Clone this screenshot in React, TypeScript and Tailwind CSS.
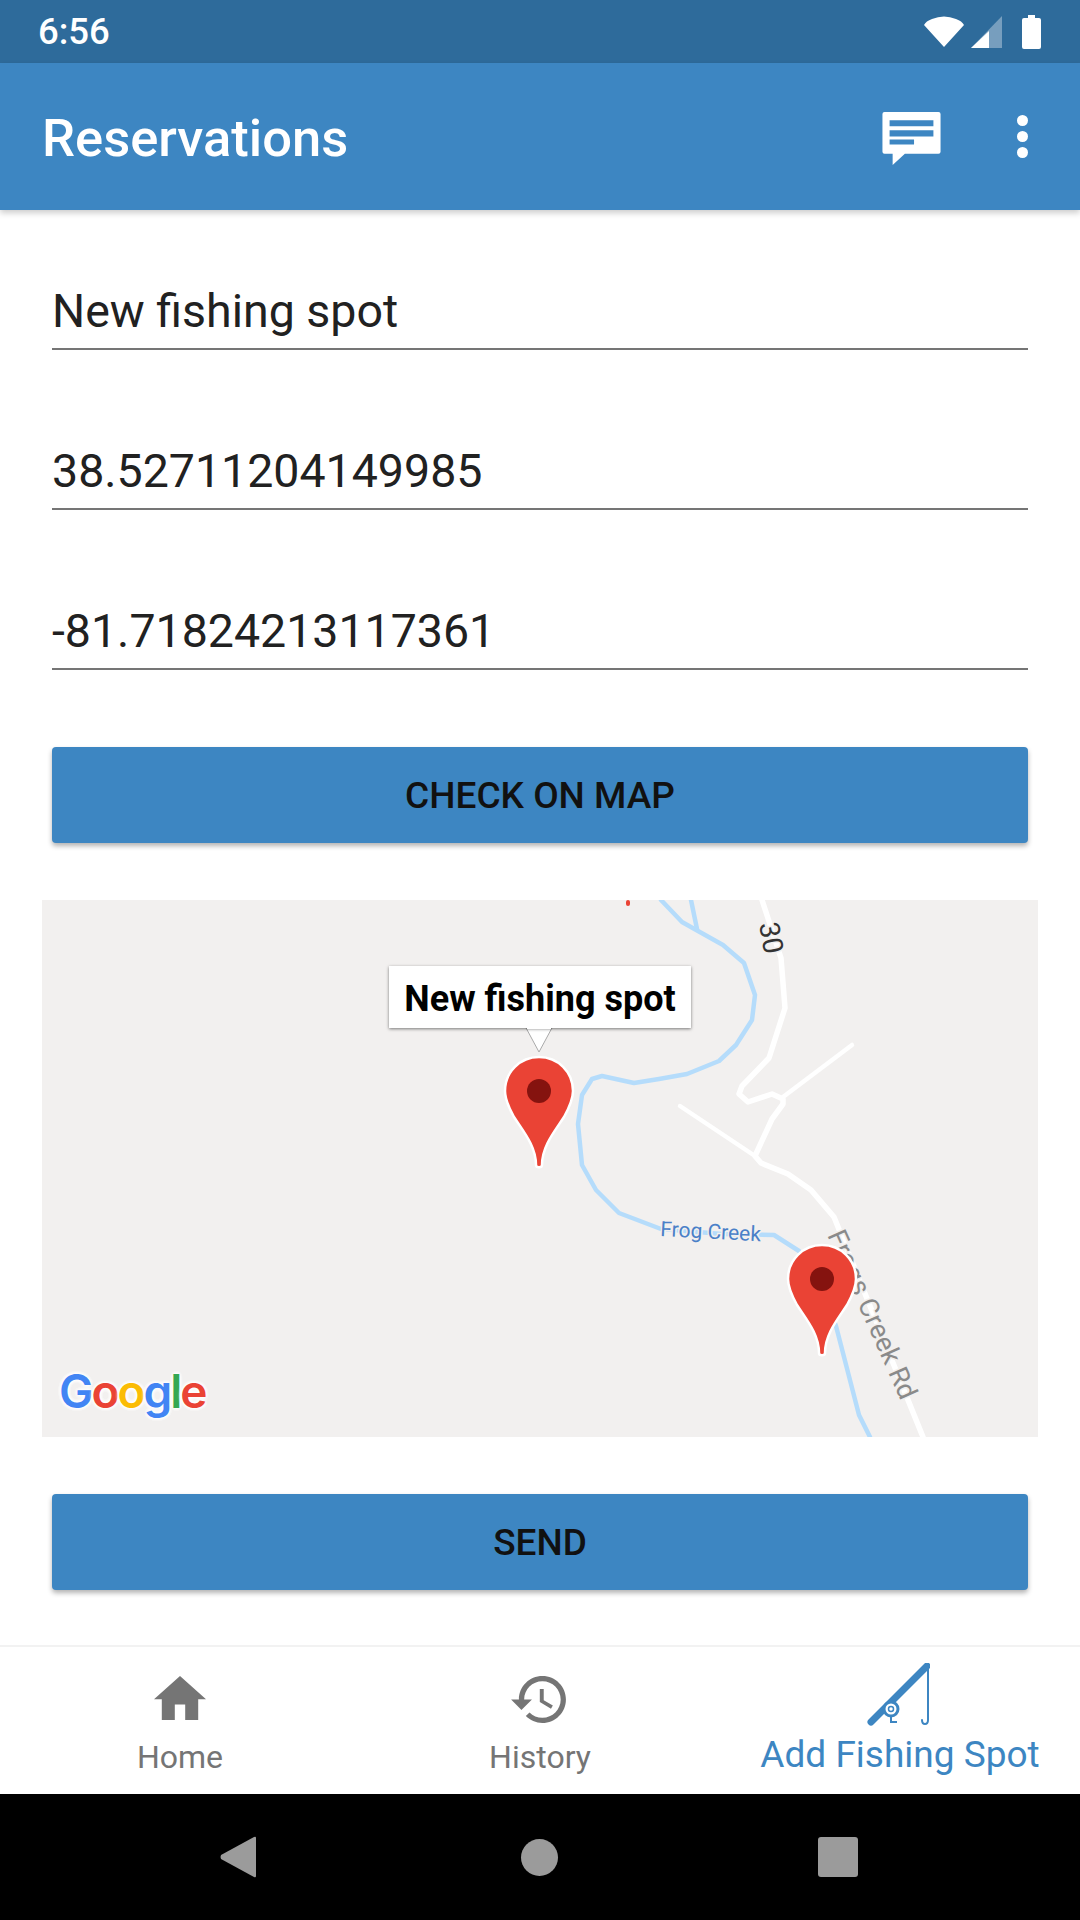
const river = '619,0 640,22 656,31 681,45 702,63 713,95 710,120 694,145 677,161 645,174 617,179 592,183 560,176 550,179 540,195 536,224 540,265 554,290 577,313 619,329 680,334 732,335 757,351 780,390 794,426 817,515 828,537'
const road = '720,0 739,58 743,108 727,158 700,186 697,194 706,202 730,194 741,199 741,204 730,219 713,256 719,263 746,274 769,290 792,317 881,537'

function Field({ value }: { value: string }) {
  return (
    <div className="mx-[52px] h-[65px] border-b-2 border-[#757575] text-[46.5px] leading-[52px] text-[#212121]">
      {value}
    </div>
  )
}

function ActionButton({ label }: { label: string }) {
  return (
    <button className="mx-[52px] h-[96px] rounded-[4px] bg-[#3d86c2] pt-[2px] text-[37px] font-medium text-[#111] shadow-[0_3px_5px_rgba(0,0,0,0.3)]">
      {label}
    </button>
  )
}

function Pin({ x, y }: { x: number; y: number }) {
  return (
    <g transform={`translate(${x} ${y})`}>
      <path
        d="M0 -1C-19 -1 -34 14 -34 33C-34 42 -30 50 -25 59C-16 73 -3 88 -3 107C-3 110 3 110 3 107C3 88 16 73 25 59C30 50 34 42 34 33C34 14 19 -1 0 -1Z"
        fill="#ea4335"
        stroke="#fff"
        strokeWidth="2.5"
      />
      <circle cx="0" cy="33" r="12" fill="#85130f" />
    </g>
  )
}

function MapPanel() {
  return (
    <div className="relative mx-[42px] mt-[57px] h-[537px] overflow-hidden bg-[#f2f0ef]">
      <svg viewBox="0 0 996 537" className="h-full w-full">
        <g fill="none" strokeLinejoin="round" strokeLinecap="round">
          <polyline points={river} stroke="#b5dcfb" strokeWidth="4.5" />
          <polyline points="649,0 655,29" stroke="#b5dcfb" strokeWidth="4.5" />
          <polyline points={road} stroke="#fff" strokeWidth="5.5" />
          <polyline points="810,145 741,197" stroke="#fff" strokeWidth="4.5" />
          <polyline points="638,206 713,256" stroke="#fff" strokeWidth="4.5" />
        </g>
        <rect x="584" y="0" width="4" height="6" rx="2" fill="#ea4335" />
        <text
          transform="translate(717 24) rotate(80)"
          fontSize="28"
          fill="#333"
          stroke="#f2f0ef"
          strokeWidth="3"
          paintOrder="stroke"
        >
          30
        </text>
        <text
          transform="translate(618 336) rotate(3)"
          fontSize="21"
          fill="#4a80c8"
          stroke="#f2f0ef"
          strokeWidth="3"
          paintOrder="stroke"
        >
          Frog Creek
        </text>
        <text
          transform="translate(785 335) rotate(66)"
          fontSize="27"
          fill="#8a8a8a"
          stroke="#f2f0ef"
          strokeWidth="3"
          paintOrder="stroke"
        >
          Frogs Creek Rd
        </text>
        <Pin x={497} y={158} />
        <Pin x={780} y={346} />
        <path d="M483 126L497 152L511 126Z" fill="#fff" stroke="#aaa" strokeWidth="1" />
      </svg>

      <div className="absolute left-[347px] top-[66px] flex h-[62px] w-[302px] items-center justify-center bg-white pt-[3px] text-[36px] font-bold text-black shadow-[0_1px_3px_rgba(0,0,0,0.5)]">
        New fishing spot
      </div>
      <div className="absolute left-[485px] top-[125px] h-[4px] w-[24px] bg-white" />

      <div className="absolute left-[17px] top-[461px] font-['Inter',sans-serif] text-[46px] leading-[60px] font-semibold tracking-[-2px] [text-shadow:0_0_4px_#fff,0_0_4px_#fff,0_0_4px_#fff,0_0_4px_#fff]">
        <span className="text-[#4285f4]">G</span>
        <span className="text-[#ea4335]">o</span>
        <span className="text-[#fbbc05]">o</span>
        <span className="text-[#4285f4]">g</span>
        <span className="text-[#34a853]">l</span>
        <span className="text-[#ea4335]">e</span>
      </div>
    </div>
  )
}

function NavItem({ label, active, children }: { label: string; active?: boolean; children: React.ReactNode }) {
  return (
    <div className="flex flex-1 flex-col items-center pt-[13px]">
      <div className="flex h-[63px] items-end justify-center">{children}</div>
      <span className={active ? 'mt-[10px] text-[37px] leading-[44px] text-[#3d86c2]' : 'mt-[12px] text-[32px] leading-[44px] text-[#757575]'}>
        {label}
      </span>
    </div>
  )
}

export default function App() {
  return (
    <div className="flex h-[1920px] w-[1080px] flex-col overflow-hidden bg-white font-['Roboto',sans-serif]">
      <div className="flex h-[63px] items-center justify-between bg-[#2e6b9b] pl-[38px] pr-[39px]">
        <span className="mt-[2px] text-[36.5px] font-medium text-white">6:56</span>
        <div className="flex items-center gap-[7px]">
          <svg width="40" height="32" viewBox="0 0 40 32">
            <path d="M20 31L0 9Q2 5 8 3Q20 -2 32 3Q38 5 40 9Z" fill="#fff" />
          </svg>
          <svg width="31" height="32" viewBox="0 0 31 32" className="mr-[13px]">
            <path d="M31 0V32H0Z" fill="#fff" fillOpacity="0.35" />
            <path d="M18 15V32H0Z" fill="#fff" />
          </svg>
          <svg width="19" height="34" viewBox="0 0 19 34">
            <path d="M6 0H13V3H17Q19 3 19 5V32Q19 34 17 34H2Q0 34 0 32V5Q0 3 2 3H6Z" fill="#fff" />
          </svg>
        </div>
      </div>

      <header className="relative z-10 flex h-[147px] items-center justify-between bg-[#3d86c2] pl-[42px] pr-[52px] shadow-[0_3px_6px_rgba(0,0,0,0.2)]">
        <h1 className="mt-[3px] text-[52.5px] font-medium text-white">Reservations</h1>
        <div className="flex items-center gap-[76px]">
          <svg width="59" height="53" viewBox="0 0 57 52" className="mt-[4px]">
            <path
              fillRule="evenodd"
              fill="#fff"
              d="M2 0H55Q57 0 57 2V39Q57 41 55 41H22L10 52V41H2Q0 41 0 39V2Q0 0 2 0ZM7 8V14H50V8ZM7 18V24H50V18ZM7 27V32H31V27Z"
            />
          </svg>
          <div className="flex flex-col gap-[5px]">
            <div className="h-[11px] w-[11px] rounded-full bg-white" />
            <div className="h-[11px] w-[11px] rounded-full bg-white" />
            <div className="h-[11px] w-[11px] rounded-full bg-white" />
          </div>
        </div>
      </header>

      <main className="flex flex-1 flex-col">
        <div className="mt-[75px] flex flex-col gap-[95px]">
          <Field value="New fishing spot" />
          <Field value="38.52711204149985" />
          <Field value="-81.71824213117361" />
        </div>
        <div className="mt-[77px] flex flex-col">
          <ActionButton label="CHECK ON MAP" />
        </div>
        <MapPanel />
        <div className="mt-[57px] flex flex-col">
          <ActionButton label="SEND" />
        </div>
      </main>

      <nav className="flex h-[149px] border-t-2 border-[#f2f2f2] bg-white">
        <NavItem label="Home">
          <svg width="52" height="46" viewBox="2 3 20 17" className="mb-[2px]">
            <path fill="#757575" d="M10 20v-6h4v6h5v-8h3L12 3 2 12h3v8z" />
          </svg>
        </NavItem>
        <NavItem label="History">
          <svg width="55" height="47" viewBox="1 3 21 18" className="mr-[4px]">
            <path
              fill="#757575"
              d="M13 3c-4.97 0-9 4.03-9 9H1l3.89 3.89.07.14L9 12H6c0-3.87 3.13-7 7-7s7 3.13 7 7-3.13 7-7 7c-1.93 0-3.68-.79-4.94-2.06l-1.42 1.42C8.27 19.99 10.51 21 13 21c4.97 0 9-4.03 9-9s-4.03-9-9-9zm-1 5v5l4.28 2.54.72-1.21-3.5-2.08V8H12z"
            />
          </svg>
        </NavItem>
        <NavItem label="Add Fishing Spot" active>
          <svg width="63" height="63" viewBox="0 0 63 63" fill="none" stroke="#3d86c2" className="mb-[-3px] mr-[3px]">
            <path d="M4 59L60 3" strokeWidth="7" strokeLinecap="round" />
            <path d="M61 3V57Q61 61 58 61Q55 61 55 57" strokeWidth="2" strokeLinecap="round" />
            <circle cx="24" cy="46" r="7" fill="#fff" strokeWidth="3" />
            <circle cx="24" cy="46" r="2.5" strokeWidth="1.5" />
            <path d="M24 54V59H30" strokeWidth="2" />
          </svg>
        </NavItem>
      </nav>

      <div className="relative flex h-[126px] items-center bg-black">
        <svg width="36" height="42" viewBox="0 0 36 42" className="ml-[220px]">
          <path d="M36 2V40Q36 42 34 41L1 23Q0 21 1 19L34 1Q36 0 36 2Z" fill="#9b9b9b" />
        </svg>
        <div className="ml-[265px] h-[37px] w-[37px] rounded-full bg-[#9b9b9b]" />
        <div className="ml-[260px] h-[40px] w-[40px] rounded-[3px] bg-[#9b9b9b]" />
      </div>
    </div>
  )
}
